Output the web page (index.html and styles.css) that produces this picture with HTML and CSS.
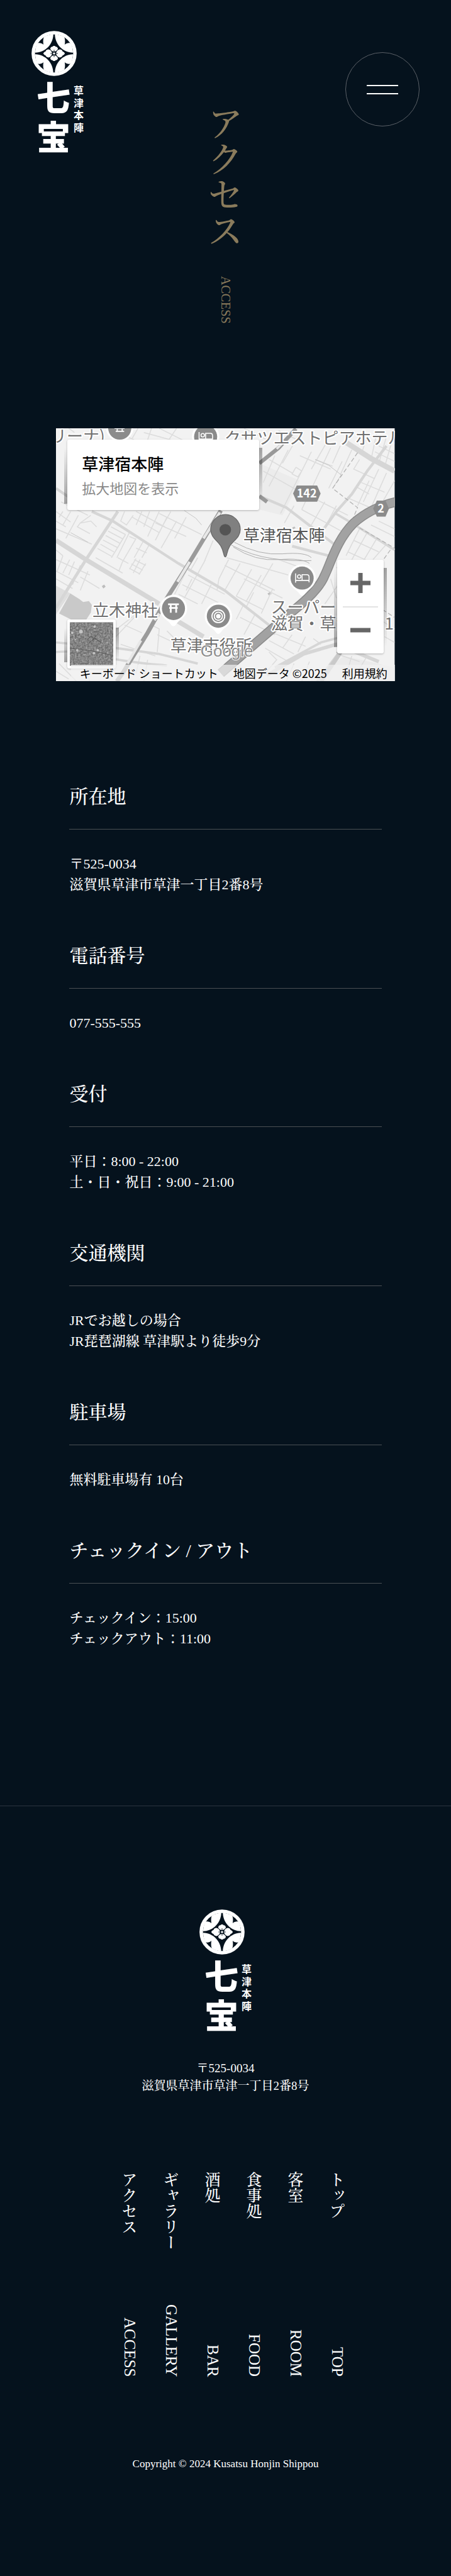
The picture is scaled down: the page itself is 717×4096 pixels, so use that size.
FILE: index.html
```html
<!DOCTYPE html>
<html lang="ja">
<head>
<meta charset="utf-8">
<meta name="viewport" content="width=device-width, initial-scale=1">
<title>アクセス | 草津本陣 七宝</title>
<link rel="stylesheet" href="styles.css">
</head>
<body>
<svg class="defs" width="0" height="0" aria-hidden="true">
  <defs>
    <g id="leaf">
      <path d="M-4 -99 C-6 -48 -44 -6 -98 -4 C-98 -22 -94 -39 -86 -53 C-77 -56 -64 -54 -55 -46 C-58 -60 -57 -76 -53 -84 C-40 -94 -22 -99 -4 -99Z"/>
    </g>
    <g id="petal">
      <path d="M0 -10 C-12 -11 -16 -18 -20 -24 C-18 -34 -12 -36 -8 -35 C-5 -41 5 -41 8 -35 C12 -36 18 -34 20 -24 C16 -18 12 -11 0 -10Z"/>
    </g>
    <g id="petal-wide">
      <path d="M-10 0 C-12 -12 -19 -19 -29 -21 C-36 -21 -42 -17 -44 -11 C-49 -9 -54 -5 -56 0 C-54 5 -49 9 -44 11 C-42 17 -36 21 -29 21 C-19 19 -12 12 -10 0Z"/>
    </g>
    <g id="crest">
      <circle r="108" fill="none" stroke="#fff" stroke-width="18"/>
      <g fill="#fff">
        <use href="#leaf"/>
        <use href="#leaf" transform="scale(-1 1)"/>
        <use href="#leaf" transform="scale(1 -1)"/>
        <use href="#leaf" transform="scale(-1 -1)"/>
        <use href="#petal"/>
        <use href="#petal" transform="scale(1 -1)"/>
        <use href="#petal-wide"/>
        <use href="#petal-wide" transform="scale(-1 1)"/>
        <circle r="6"/>
      </g>
      <path d="M0 -19V-9M0 9V19M-19 0H-9M9 0H19" stroke="#05121d" stroke-width="3"/>
      <circle r="8" fill="none" stroke="#05121d" stroke-width="2"/>
    </g>
    <g id="logo">
      <use href="#crest" transform="translate(36 36) scale(.3064)"/>
      <g class="logo-main"><text x="8" y="127">七</text><text x="8" y="190">宝</text></g>
      <g class="logo-side"><text x="67" y="101">草</text><text x="67" y="121">津</text><text x="67" y="140">本</text><text x="67" y="160">陣</text></g>
    </g>
    <g id="pin">
      <path d="M0 92 C-8 92 -12 84 -20 74 C-34 58 -71 42 -71 0 A71 71 0 1 1 71 0 C71 42 34 58 20 74 C12 84 8 92 0 92Z" fill="#fff"/>
      <circle r="60" fill="#8b8b8b"/>
    </g>
    <g id="bed" fill="none" stroke="#fff" stroke-width="5">
      <path d="M-34 -24V24M-34 12H36M36 22V-6Q36 -18 24 -18H0V12"/>
      <circle cx="-15" cy="-8" r="9"/>
    </g>
  </defs>
</svg>

<header class="hero">
  <a class="logo" href="#top" aria-label="草津本陣 七宝"><svg viewBox="0 0 83 196"><use href="#logo"/></svg></a>
  <h1 class="title"><span class="title-ja">アクセス</span><span class="title-en">ACCESS</span></h1>
  <button class="menu" type="button" aria-label="メニュー"><span></span><span></span></button>
</header>

<main>
  <div class="map">
    <svg class="map-art" viewBox="0 0 539 403" preserveAspectRatio="xMidYMid slice">
      <rect width="539" height="403" fill="#f2f2f2"/>
      <g transform="scale(.3065) translate(-24 -18)" fill="none">
        <path d="M24 835 L98 875 L24 985Z" fill="#dedede"/>
        <path d="M98 875 L145 905 165 920 195 915 210 935 205 975 160 1045 120 1020 40 980Z" fill="#c9c9c9"/>
        <path d="M1080 200 L1290 290 1200 470 1080 440Z" fill="#ececec"/>
        <path d="M1340 1332 L1520 1200 1782 1260 V1332Z" fill="#ebebeb"/>
        <g fill="#bdbdbd"><path d="M262 838l12 -8 8 10-12 10zM1122 876l14 -8 8 10-14 8zM1250 534l12-6 6 8-12 6z"/></g>
        <g stroke="#dcdcdc" stroke-width="5">
          <path d="M24 450 L100 505 M50 400 L190 470 M24 500 L75 530 M24 540 L210 620 M100 450 L60 520 M140 470 L75 590 M205 470 L150 510 135 530 200 565 M60 450 L40 480 M150 510 L205 500 235 530"/>
          <path d="M310 530 L385 570 M295 552 L370 592 M282 575 L355 615 M268 598 L342 637 M255 620 L325 660 M240 642 L312 682 M385 570 L312 690 M405 560 L340 690 M440 590 L370 710 M345 690 L400 720 M405 580 L440 595 M480 600 L430 690 M510 620 L470 690 M440 640 L495 665"/>
          <path d="M430 700 L490 730 M415 722 L475 755 M405 745 L460 775 M440 695 L405 750 M490 720 L455 778 M460 700 L425 770 M230 690 L370 770 M370 710 L350 760"/>
          <path d="M380 450 L360 500 390 520 425 470 M440 450 L590 530 M420 480 L560 560 M470 450 L440 520 M510 450 L480 530 M560 450 L500 580 M600 480 L540 600 M650 500 L570 640 M700 480 L640 590 M540 510 L700 580 M560 460 L780 570 M620 450 L580 520"/>
          <path d="M24 650 L60 680 M24 700 L200 780 M60 680 L30 760 M95 700 L60 770 M120 710 L90 780 M150 730 L110 830 M24 760 L140 820 M24 800 L110 850 M190 760 L150 860 M150 790 L250 850"/>
          <path d="M340 1060 L470 960 M335 1100 L440 990 M380 1040 L470 1080 M360 1140 L540 1200 M520 1040 L560 1060 550 1180 M550 1090 L700 1160 M600 1070 L640 1110 M24 1280 L90 1320 M40 1240 L130 1332 M180 1280 L200 1332 M460 1200 L440 1290 M500 1220 L480 1332"/>
          <path d="M700 760 L640 880 M760 690 L720 760 M800 700 L690 900 M840 600 L790 720 M710 780 L900 880 M680 830 L880 930 M660 880 L760 930 M730 800 L700 860 M830 830 L780 930 M870 800 L860 860"/>
          <path d="M920 700 L870 800 M980 720 L900 860 M1040 750 L960 890 M1090 780 L1010 920 M900 730 L1160 860 M910 690 L1230 780 M1150 720 L1080 840 M1180 700 L1290 740 M960 890 L1100 960 M1000 800 L1200 900 M1050 870 L1010 950 M1150 850 L1090 980 M1000 930 L960 1010 M1060 980 L1000 1090 M980 1000 L1160 1090"/>
          <path d="M1100 240 L1330 370 M1130 180 L1250 250 M1160 160 L1100 300 M1230 130 L1130 320 M1350 140 L1190 460 M1280 60 L1200 200 M1290 160 L1450 230 M1270 220 L1300 240 1280 270 1250 255 1270 220 M1370 180 L1460 215 M1450 120 L1300 440 M1510 190 L1440 330 M1360 380 L1540 470 M1300 440 L1520 560 M1260 420 L1210 510 M1420 400 L1350 520 M1480 420 L1390 590"/>
          <path d="M1430 90 L1350 230 M1500 110 L1460 200 M1560 130 L1500 260 M1600 180 L1570 230 1680 280 M1610 300 L1730 350 M1580 320 L1650 360 M1540 380 L1680 440 M1700 230 L1620 400 M1740 250 L1660 430 M1782 290 L1720 400 M1650 290 L1590 420 M1640 60 L1610 150 M1690 40 L1660 180 M1740 60 L1700 200 M1700 110 L1782 150 M1680 140 L1782 190 M1770 80 L1730 220"/>
          <path d="M1600 540 L1530 680 M1640 560 L1560 700 M1690 590 L1600 740 M1740 620 L1670 700 M1570 600 L1700 660 M1540 660 L1650 710 M1700 500 L1782 540 M1660 520 L1782 580 M1450 800 L1480 900 M1490 830 L1420 930 M1480 740 L1510 760"/>
          <path d="M1130 1120 L1260 1190 M1150 1080 L1320 1150 M1110 1160 L1230 1230 M1250 1090 L1200 1160 M1320 1100 L1280 1180 M1130 1180 L1170 1220 1110 1290 M1360 1110 L1400 1140 M1480 1190 L1600 1230 M1560 1200 L1520 1332 M1640 1200 L1580 1300 M1720 1020 L1782 1060 M1730 1100 L1782 1130 M1260 1240 L1220 1332 M1340 1230 L1300 1332"/>
          <path d="M300 18 L430 78 M450 18 L420 70 M520 18 L500 78 M560 18 L680 78 M650 18 L610 78 M90 18 L120 40 M1000 18 L1120 78 M1180 30 L1300 90 M480 40 L620 78"/>
        </g>
        <g stroke="#d6d6d6">
          <path d="M24 600 L180 700 560 930 M640 1010 L790 1100" stroke-width="24"/>
          <path d="M24 330 L90 375 M210 450 L320 500 660 720 900 860 1130 1040" stroke-width="14"/>
          <path d="M345 450 L180 700 24 950" stroke-width="16"/>
          <path d="M24 1130 L340 1160 560 1190 760 1240 M24 1180 Q130 1170 250 1200 T600 1250" stroke-width="12"/>
          <path d="M1080 370 L1220 430 1350 530 1475 625 M1250 630 L1440 680" stroke-width="14"/>
          <path d="M1520 85 L1660 175 1782 240" stroke-width="28"/>
          <path d="M1740 110 L1640 240 1560 360 1480 450 1415 540" stroke-width="14"/>
          <path d="M1475 460 L1560 510 1782 650" stroke-width="12"/>
          <path d="M1570 1080 L1380 1332 M1160 1260 L1400 1130 1530 1095" stroke-width="12"/>
          <path d="M1120 1300 L1310 1190 1480 1140 1700 1230" stroke-width="18"/>
        </g>
        <g stroke="#c2c2c2" stroke-width="3">
          <path d="M100 560 L155 590 190 610 M690 445 L750 485 780 520 M1370 180 L1440 210 1505 260 1460 330"/>
          <path d="M935 625 Q1040 680 1150 695 T1350 705" stroke="#a7a7a7"/>
          <path d="M950 610 Q1080 680 1200 670 T1350 690" stroke="#a7a7a7"/>
          <path d="M945 635 Q1060 710 1180 700 T1340 720" stroke="#a7a7a7"/>
        </g>
        <path d="M1590 145 L1460 330 1590 430 1560 500 M1600 535 L1782 640 M1760 650 L1710 720 M1720 960 L1782 1000" stroke="#b0b0b0" stroke-width="4" stroke-dasharray="22 12"/>
        <g>
          <path d="M880 445 L720 710 600 900 500 1080 370 1290 340 1332" stroke="#9b9b9b" stroke-width="22"/>
          <path d="M875 455 L790 590 M718 712 L655 815 M560 980 L535 1015 M465 1120 L395 1240" stroke="#e8e8e8" stroke-width="14"/>
          <path d="M1270 20 L1180 120 1080 200 M1080 370 L1120 400" stroke="#999" stroke-width="20"/>
          <path d="M1210 85 L1170 125" stroke="#e8e8e8" stroke-width="12"/>
          <path d="M1570 1080 L1400 1332" stroke="#c9c9c9" stroke-width="22"/>
          <path d="M1490 1190 L1570 1070" stroke="#b0b0b0" stroke-width="26"/>
          <path d="M1790 400 Q1660 430 1570 510 C1480 600 1450 720 1420 780 Q1390 860 1250 970 L880 1290" stroke="#8b8b8b" stroke-width="50"/>
          <path d="M1790 400 Q1660 430 1570 510 C1480 600 1450 720 1420 780 Q1390 860 1250 970 L880 1290" stroke="#a2a2a2" stroke-width="40"/>
        </g>
        <g fill="#8b8b8b">
          <path d="M1274 315H1380L1398 357 1380 399H1274L1255 357Z"/>
          <path d="M1690 394H1735L1753 435 1735 477H1690L1671 435Z"/>
        </g>
        <use href="#pin" transform="translate(355 17)"/><path d="M328 18h52M334 34h44M342 18v16M368 18v16" stroke="#fff" stroke-width="6"/>
        <use href="#pin" transform="translate(801 62)"/><use href="#bed" transform="translate(801 62)"/>
        <use href="#pin" transform="translate(634 954)"/>
        <path d="M606 932h56M612 951h44M620 932v44M648 932v44" stroke="#fff" stroke-width="9"/>
        <use href="#pin" transform="translate(867 994)"/>
        <g stroke="#fff" stroke-width="6"><circle cx="867" cy="994" r="33"/><circle cx="867" cy="994" r="21"/><circle cx="867" cy="994" r="9" fill="#fff"/></g>
        <use href="#pin" transform="translate(1302 796)"/><use href="#bed" transform="translate(1302 796)"/>
        <path d="M903 686 C893 686 898 660 880 630 C862 600 827 585 827 543 A77 77 0 0 1 981 543 C981 585 946 600 926 630 C908 660 913 686 903 686Z" fill="#808080" stroke="#666" stroke-width="4"/>
        <circle cx="903" cy="545" r="30" fill="#545454"/>
      </g>
      <g class="map-label">
        <text x="-9" y="22">リーナ)</text>
        <text x="268" y="25">クサツエストピアホテル</text>
        <text x="58" y="299">立木神社</text>
        <text x="182" y="355">草津市役所</text>
        <text x="342" y="294">スーパー</text>
        <text x="342" y="320">滋賀・草津</text>
        <text x="523" y="320">1</text>
        <text class="place" x="298" y="180">草津宿本陣</text>
      </g>
      <g class="map-route"><text x="399" y="110">142</text><text x="517" y="134">2</text></g>
      <text class="map-brand" x="230" y="363">Google</text>
    </svg>
    <div class="map-card">
      <strong>草津宿本陣</strong>
      <a href="#map">拡大地図を表示</a>
    </div>
    <button class="map-layer" type="button" aria-label="航空写真">
      <svg viewBox="0 0 70 70">
        <defs><filter id="grain"><feTurbulence type="fractalNoise" baseFrequency=".35" numOctaves="3" seed="4"/><feColorMatrix values="0 0 0 0 .5  0 0 0 0 .5  0 0 0 0 .5  1.4 0 0 0 -.4"/></filter></defs>
        <rect width="70" height="70" fill="#6b6b6b"/>
        <path d="M0 0H70V70H0Z" filter="url(#grain)"/>
        <path d="M0 42 Q35 44 70 54" fill="none" stroke="#5a5a5a" stroke-width="1"/>
        <g fill="#c4c4c4"><circle cx="18" cy="15" r="3"/><circle cx="40" cy="7" r="2"/><circle cx="4" cy="17" r="2"/><circle cx="45" cy="45" r="2"/><circle cx="39" cy="50" r="2"/><circle cx="9" cy="28" r="1"/><circle cx="12" cy="45" r="2"/><circle cx="60" cy="33" r="1"/></g>
        <path d="M28 28l6-6 4 4 8-8M30 34l10-8 10 6" fill="none" stroke="#505050" stroke-width="1"/>
      </svg>
    </button>
    <div class="map-zoom">
      <button type="button" aria-label="拡大"><svg viewBox="0 0 34 34"><path d="M17 1V33M1 17H33" stroke="#666" stroke-width="7"/></svg></button>
      <button type="button" aria-label="縮小"><svg viewBox="0 0 34 34"><path d="M1 17H33" stroke="#666" stroke-width="7"/></svg></button>
    </div>
    <div class="map-foot"><a href="#keys">キーボード ショートカット</a><span>地図データ ©2025</span><a href="#terms">利用規約</a></div>
  </div>

  <div class="info">
    <section><h2>所在地</h2><p>〒525-0034<br>滋賀県草津市草津一丁目2番8号</p></section>
    <section><h2>電話番号</h2><p>077-555-555</p></section>
    <section><h2>受付</h2><p>平日：8:00 - 22:00<br>土・日・祝日：9:00 - 21:00</p></section>
    <section><h2>交通機関</h2><p>JRでお越しの場合<br>JR琵琶湖線 草津駅より徒歩9分</p></section>
    <section><h2>駐車場</h2><p>無料駐車場有 10台</p></section>
    <section><h2>チェックイン / アウト</h2><p>チェックイン：15:00<br>チェックアウト：11:00</p></section>
  </div>
</main>

<footer class="footer">
  <a class="logo" href="#top" aria-label="草津本陣 七宝"><svg viewBox="0 0 83 196"><use href="#logo"/></svg></a>
  <address>〒525-0034<br>滋賀県草津市草津一丁目2番8号</address>
  <nav class="links" aria-label="フッター">
    <a href="#top"><span class="ja">トップ</span><span>TOP</span></a>
    <a href="#room"><span class="ja">客室</span><span>ROOM</span></a>
    <a href="#food"><span class="ja">食事処</span><span>FOOD</span></a>
    <a href="#bar"><span class="ja">酒処</span><span>BAR</span></a>
    <a href="#gallery"><span class="ja">ギャラリー</span><span>GALLERY</span></a>
    <a href="#access"><span class="ja">アクセス</span><span>ACCESS</span></a>
  </nav>
  <small>Copyright © 2024 Kusatsu Honjin Shippou</small>
</footer>
</body>
</html>
```
FILE: styles.css
```css
* { box-sizing: border-box; }

body {
  margin: 0;
  background: #05121d;
  color: #fff;
  font-family: "Liberation Serif", "Noto Serif CJK JP", "Noto Sans CJK JP", serif;
  font-weight: 500;
}

a { color: inherit; text-decoration: none; }
button { padding: 0; border: 0; font: inherit; cursor: pointer; }
.defs { position: absolute; }

/* logo */
.logo { display: block; width: 83px; }
.logo svg { display: block; width: 100%; overflow: visible; }
.logo-main, .logo-side { fill: #fff; font-family: "Noto Sans CJK JP", sans-serif; }
.logo-main { font-size: 54px; font-weight: 900; }
.logo-side { font-size: 16px; font-weight: 700; }

/* hero */
.hero {
  display: grid;
  grid-template-columns: 1fr auto 1fr;
  align-items: start;
  padding: 49px 50px 166px;
}
.title {
  display: flex;
  align-items: center;
  gap: 44px;
  margin: 118px 0 0;
  writing-mode: vertical-rl;
  color: #8a7b5c;
  font-weight: 500;
}
.title-ja, .ja { font-family: "Noto Serif CJK JP", "Noto Sans CJK JP", serif; }
.title-ja { font-size: 57px; line-height: 64px; }
.title-en { font-size: 20px; line-height: 24px; }
.menu {
  display: flex;
  flex-direction: column;
  align-items: center;
  justify-content: center;
  justify-self: end;
  gap: 11px;
  width: 118px;
  height: 118px;
  margin-top: 34px;
  border: 1px solid #5b6067;
  border-radius: 50%;
  background: none;
}
.menu span { width: 50px; height: 2px; background: #fff; }

/* map */
.map {
  position: relative;
  width: 75.1%;
  margin: 0 auto;
  overflow: hidden;
  font-family: "Noto Sans CJK JP", sans-serif;
}
.map-art { display: block; width: 100%; }
.map-label {
  fill: #707070;
  stroke: #fff;
  stroke-width: 4px;
  stroke-linejoin: round;
  paint-order: stroke;
  font-size: 26px;
  font-weight: 400;
}
.map-label .place { fill: #555; }
.map-route { fill: #fff; font-size: 18px; font-weight: 700; text-anchor: middle; }
.map-brand {
  fill: #8d8d8d;
  stroke: #fff;
  stroke-width: 2px;
  paint-order: stroke;
  font: 26px "Liberation Sans", sans-serif;
}
.map-card, .map-zoom, .map-layer { position: absolute; isolation: isolate; background: none; }
.map-card::before, .map-zoom::before, .map-layer::before {
  content: "";
  position: absolute;
  z-index: -2;
  inset: 13px -5px 10px;
  background:
    linear-gradient(#0000, #0005) left / 50% 100% no-repeat,
    linear-gradient(#0005, #0000) right / 50% 100% no-repeat;
}
.map-card::after, .map-zoom::after, .map-layer::after {
  content: "";
  position: absolute;
  z-index: -1;
  inset: 0;
  border-radius: 3px;
  background: #fff;
  box-shadow: 0 1px 3px #0004;
}
.map-card {
  top: 18px;
  left: 18px;
  display: flex;
  flex-direction: column;
  width: 56.6%;
  height: 112px;
  padding: 20px 23px;
  color: #000;
}
.map-card strong { font-size: 26px; line-height: 36px; font-weight: 500; }
.map-card a { color: #888; font-size: 22px; line-height: 40px; font-weight: 400; }
.map-layer { left: 18px; bottom: 20px; width: 77px; height: 78px; padding: 4px; }
.map-layer svg { display: block; width: 100%; height: 100%; }
.map-zoom {
  right: 18px;
  bottom: 44px;
  display: flex;
  flex-direction: column;
  width: 74px;
  height: 149px;
  padding: 0 9px;
}
.map-zoom button { display: grid; flex: 1; place-items: center; background: none; }
.map-zoom button + button { border-top: 2px solid #e3e3e3; }
.map-zoom svg { width: 34px; height: 34px; }
.map-foot {
  position: absolute;
  right: 0;
  bottom: 0;
  left: 24px;
  display: flex;
  justify-content: flex-end;
  gap: 24px;
  padding-right: 12px;
  background: #f2f2f2b0;
  color: #000;
  font-size: 18px;
  line-height: 26px;
  font-weight: 400;
  white-space: nowrap;
}

/* details */
.info {
  display: flex;
  flex-direction: column;
  gap: 77px;
  width: 69.2%;
  margin: 164px auto 249px;
}
.info h2 {
  margin: 0;
  padding-bottom: 31px;
  border-bottom: 1px solid #4b5054;
  font-size: 30px;
  line-height: 40px;
  font-weight: 500;
}
.info p { margin: 38px 0 0; font-size: 22px; line-height: 33px; }

/* footer */
.footer {
  display: flex;
  flex-direction: column;
  align-items: center;
  padding: 164px 0;
  border-top: 1px solid #2b3540;
}
.footer address {
  margin-top: 43px;
  font-size: 19px;
  line-height: 28px;
  font-style: normal;
  text-align: center;
}
.links {
  display: flex;
  flex-direction: row-reverse;
  gap: 30px;
  height: 326px;
  margin: 122px 0 126px;
  padding-left: 25px;
}
.links a {
  display: flex;
  justify-content: space-between;
  writing-mode: vertical-rl;
  font-size: 25px;
  line-height: 36px;
}
.footer small { font-size: 17px; line-height: 26px; }
```
